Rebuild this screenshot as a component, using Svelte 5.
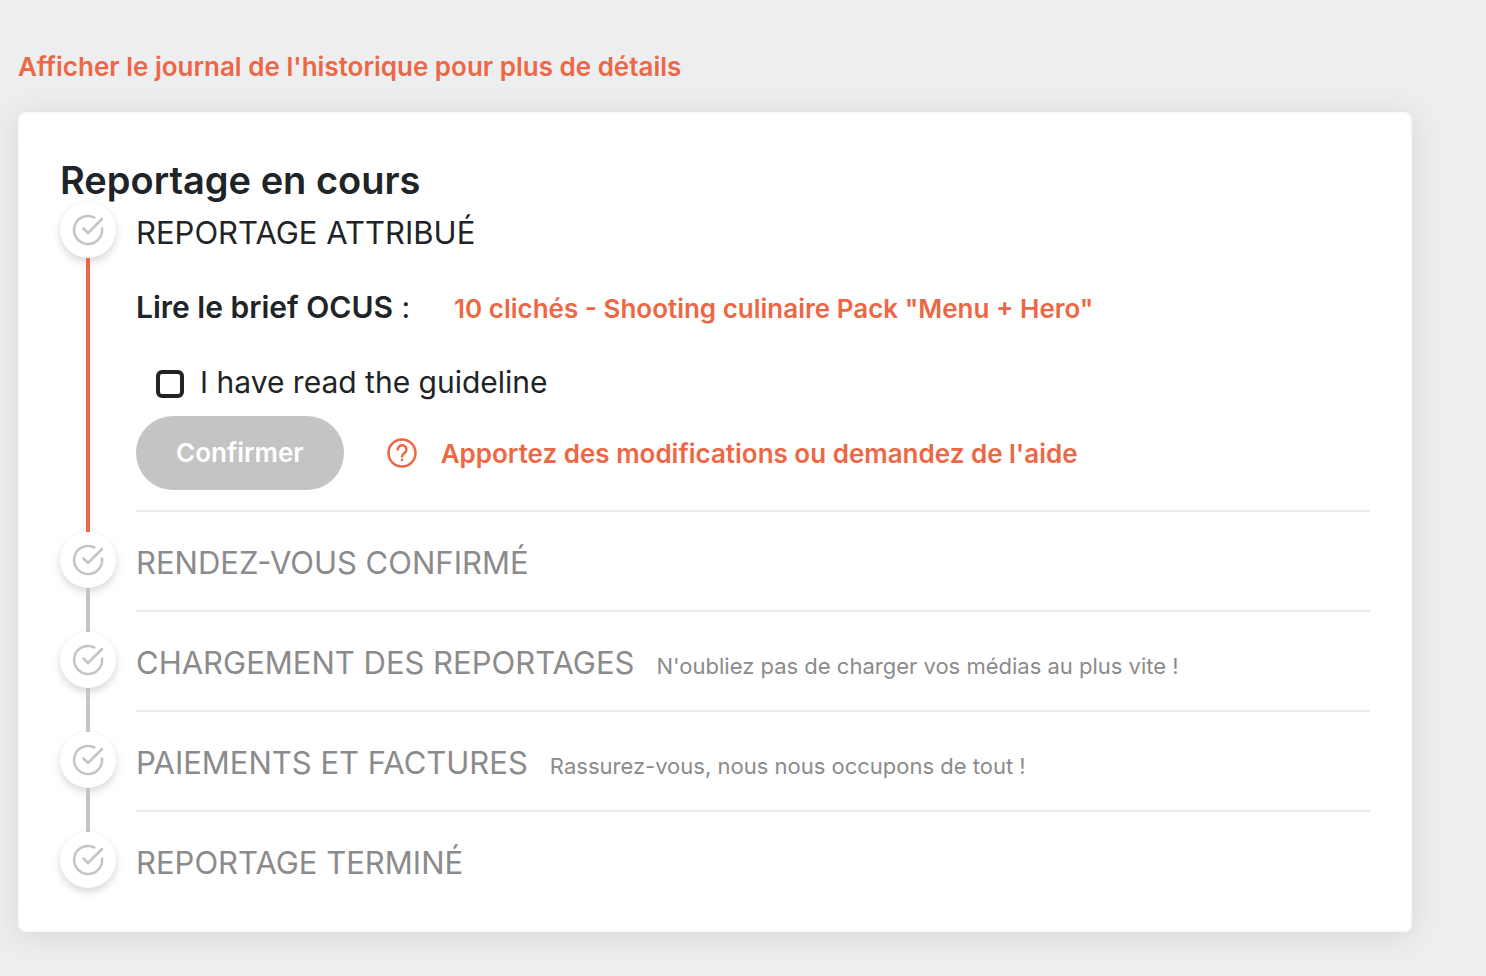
<script>
  let read = false;

  const upcoming = [
    { title: 'RENDEZ-VOUS CONFIRMÉ', note: '' },
    { title: 'CHARGEMENT DES REPORTAGES', note: "N'oubliez pas de charger vos médias au plus vite !" },
    { title: 'PAIEMENTS ET FACTURES', note: 'Rassurez-vous, nous nous occupons de tout !' },
    { title: 'REPORTAGE TERMINÉ', note: '' }
  ];
</script>

{#snippet badge()}
  <span class="badge">
    <svg viewBox="0 0 32 32" width="32" height="32" aria-hidden="true">
      <path d="M22.2 3.4A14 14 0 1 0 30 14.6" />
      <path d="M11.5 14.5l4.5 4.500L30 5" />
    </svg>
  </span>
{/snippet}

<main>
  <a class="link history" href="#history">Afficher le journal de l'historique pour plus de détails</a>

  <section class="card">
    <h1>Reportage en cours</h1>
    <ol>
      <li class="step active">
        <div class="rail">
          {@render badge()}
          <span class="line"></span>
        </div>
        <div class="content">
          <h2>REPORTAGE ATTRIBUÉ</h2>
          <div class="brief">
            <span><strong>Lire le brief OCUS</strong> :</span>
            <a class="link" href="#brief">10 clichés - Shooting culinaire Pack "Menu + Hero"</a>
          </div>
          <label>
            <input type="checkbox" bind:checked={read} />
            I have read the guideline
          </label>
          <div class="actions">
            <button type="button" disabled={!read}>Confirmer</button>
            <a class="link help" href="#help">
              <svg viewBox="0 0 32 32" width="32" height="32" aria-hidden="true">
                <circle cx="16" cy="16" r="13.500" />
                <path d="M11.800 12.500a4.300 4.300 0 1 1 6.800 3.500c-1.700 1.200-2.600 1.800-2.600 3.500" />
                <path d="M16 22.800v.2" />
              </svg>
              Apportez des modifications ou demandez de l'aide
            </a>
          </div>
        </div>
      </li>
      {#each upcoming as step, i}
        <li class="step">
          <div class="rail">
            {@render badge()}
            {#if i < upcoming.length - 1}
              <span class="line"></span>
            {/if}
          </div>
          <div class="content">
            <div class="heading">
              <h2>{step.title}</h2>
              {#if step.note}
                <p>{step.note}</p>
              {/if}
            </div>
          </div>
        </li>
      {/each}
    </ol>
  </section>
</main>

<style>
  :global(body) {
    background: #edeef0;
  }

  main {
    padding: 46px 74px 44px 18px;
    font-family: Inter, 'Liberation Sans', sans-serif;
    color: #212427;
  }

  .link {
    color: #ee6744;
    font-size: 26px;
    font-weight: 600;
    text-decoration: none;
  }

  .history {
    display: block;
    line-height: 42px;
    margin-bottom: 24px;
  }

  .card {
    padding: 44px 40px 36px;
    border: 2px solid #f9fafa;
    border-radius: 8px;
    background: #fff;
    box-shadow: 0 4px 32px rgba(0, 0, 0, 0.1);
  }

  h1 {
    margin: 0;
    font-size: 38px;
    font-weight: 600;
    line-height: 44px;
  }

  ol {
    margin: 0;
    padding: 0;
    list-style: none;
  }

  .step {
    display: flex;
    gap: 20px;
    color: #8b8b8b;
  }

  .active {
    color: #212427;
  }

  .rail {
    display: flex;
    flex-direction: column;
    align-items: center;
  }

  .badge {
    display: flex;
    align-items: center;
    justify-content: center;
    width: 56px;
    height: 56px;
    border-radius: 50%;
    background: #fff;
    box-shadow: 0 4px 8px rgba(0, 0, 0, 0.16);
  }

  svg {
    fill: none;
    stroke: currentColor;
    stroke-width: 2.5;
    stroke-linecap: round;
    stroke-linejoin: round;
  }

  .badge svg {
    color: #c4c4c4;
  }

  .line {
    position: relative;
    flex: 1;
    width: 4px;
    background: #c4c4c4;
  }

  .active .line {
    background: #ee6744;
  }

  .content {
    flex: 1;
    padding-bottom: 16px;
    margin-bottom: 20px;
    border-bottom: 2px solid #ebebeb;
  }

  .active .content {
    padding-bottom: 20px;
  }

  .step:last-child .content {
    padding: 0;
    margin: 0;
    border: 0;
  }

  h2 {
    margin: 0;
    font-size: 31px;
    font-weight: 400;
    line-height: 62px;
  }

  .heading {
    display: flex;
    align-items: baseline;
    gap: 22px;
  }

  p {
    margin: 0;
    font-size: 22px;
  }

  .brief {
    display: flex;
    align-items: baseline;
    gap: 44px;
    margin-top: 13px;
    font-size: 30px;
    line-height: 60px;
  }

  strong {
    font-weight: 600;
  }

  label {
    display: flex;
    align-items: center;
    gap: 16px;
    margin: 13px 0 4px 20px;
    font-size: 30px;
    line-height: 60px;
  }

  input {
    appearance: none;
    width: 28px;
    height: 28px;
    margin: 4px 0 0;
    border: 4px solid #212427;
    border-radius: 6px;
  }

  input:checked {
    background: #ee6744;
  }

  .actions {
    display: flex;
    align-items: center;
    gap: 42px;
  }

  button {
    padding: 0 40px;
    border: 0;
    border-radius: 37px;
    background: #ee6744;
    color: #fff;
    font: 600 26px/74px Inter, 'Liberation Sans', sans-serif;
  }

  button:disabled {
    background: #c4c4c4;
  }

  .help {
    display: flex;
    align-items: center;
    gap: 23px;
  }
</style>
